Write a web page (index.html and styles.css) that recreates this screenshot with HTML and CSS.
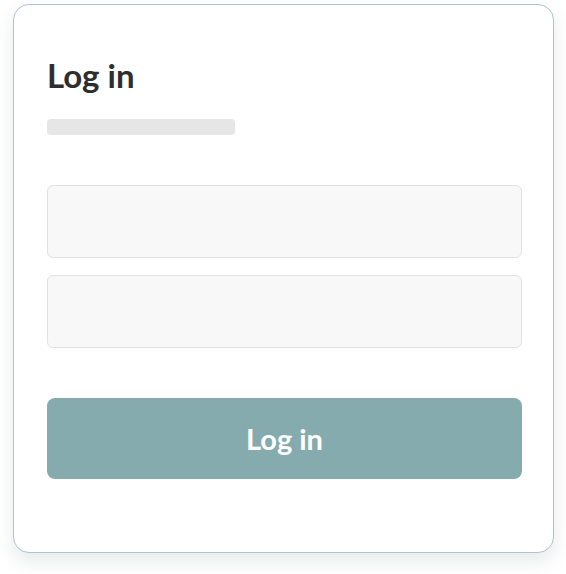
FILE: index.html
```html
<!DOCTYPE html>
<html lang="en">
<head>
<meta charset="utf-8">
<title>Log in</title>
<link rel="stylesheet" href="styles.css">
</head>
<body>
<div class="page">
  <form class="card">
    <h1 class="title">Log in</h1>
    <div class="skeleton"></div>
    <div class="fields">
      <div class="field"></div>
      <div class="field"></div>
    </div>
    <button type="button" class="submit">Log in</button>
  </form>
</div>
</body>
</html>
```
FILE: styles.css
```css
html, body {
  margin: 0;
  padding: 0;
  background: #ffffff;
}
.page {
  padding: 4px 12px 24px 13px;
  font-family: Lato, "Noto Sans", sans-serif;
}
.card {
  box-sizing: border-box;
  width: 541px;
  height: 549px;
  border: 1px solid #b3c1cf;
  border-radius: 16px;
  background: #ffffff;
  box-shadow: 0 8px 18px rgba(60, 70, 80, 0.12);
  padding: 51px 31px 0 33px;
  display: flex;
  flex-direction: column;
}
.title {
  margin: 0;
  font-size: 33px;
  line-height: 38px;
  font-weight: 700;
  color: #2e2e2e;
}
.skeleton {
  margin-top: 25px;
  width: 188px;
  height: 16px;
  border-radius: 4px;
  background: #e6e6e6;
}
.fields {
  margin-top: 50px;
  display: flex;
  flex-direction: column;
  gap: 17px;
}
.field {
  box-sizing: border-box;
  height: 73px;
  border: 1px solid #e2e2e2;
  border-radius: 6px;
  background: #f8f8f8;
}
.submit {
  margin-top: 50px;
  height: 81px;
  border: none;
  border-radius: 8px;
  background: #85abaf;
  color: #ffffff;
  font-family: Lato, "Noto Sans", sans-serif;
  font-size: 29px;
  font-weight: 700;
  padding: 0;
}
```
